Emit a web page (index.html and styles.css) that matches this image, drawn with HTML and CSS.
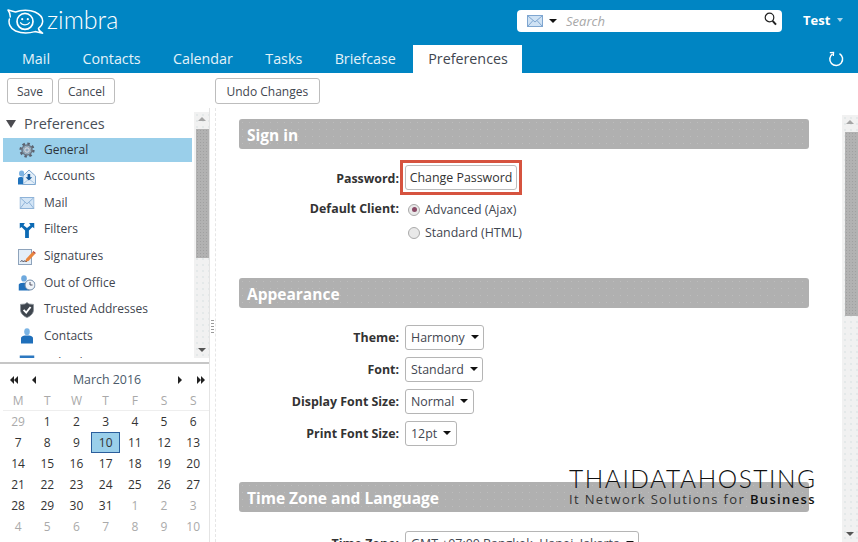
FILE: index.html
```html
<!DOCTYPE html>
<html lang="en">
<head>
<meta charset="utf-8">
<title>Zimbra Preferences</title>
<link rel="stylesheet" href="styles.css">
</head>
<body>
<div class="app">
  <header class="top">
    <div class="logo">
      <svg class="logo-mark" width="37" height="25" viewBox="0 0 37 25" fill="none" stroke="#fff" stroke-width="1.5" stroke-linejoin="round" stroke-linecap="round">
        <path d="M3.2 8 C3.4 5.5 2.6 3.2 1 1 L8.5 3 C14 0.6 23 0.7 28 3 C33.5 5.5 36 9.2 35.6 13 C35.3 15.8 33.6 17.8 31.5 19.4 C31.6 21.2 33 22.8 35.6 24.2 L28 22.6 C22 24.3 14 24.2 8.6 22 C3 19.7 1.2 14 2.4 10"/>
        <circle cx="18" cy="12.4" r="8" stroke-width="1.7"/>
        <circle cx="15.2" cy="10.2" r="1.1" fill="#fff" stroke="none"/>
        <circle cx="20.8" cy="10.2" r="1.1" fill="#fff" stroke="none"/>
        <path d="M13.6 13.8 C15 16.6 21 16.6 22.4 13.8" stroke-width="1.3"/>
      </svg>
      <span class="logo-text">zimbra</span>
    </div>
    <div class="search">
      <svg class="search-env" width="16" height="12" viewBox="0 0 16 12"><rect x="0.5" y="0.5" width="15" height="11" fill="#cfe2f4" stroke="#7fa6d0"/><path d="M1 1 L8 7 L15 1 M1 11 L6 5.5 M15 11 L10 5.5" fill="none" stroke="#7fa6d0"/></svg>
      <span class="caret-black"></span>
      <span class="search-hint">Search</span>
      <svg class="search-glass" width="13" height="14" viewBox="0 0 13 14" fill="none" stroke="#222"><circle cx="5.5" cy="5.5" r="4.3" stroke-width="1.2"/><path d="M8.6 8.8 L12 12.6" stroke-width="2"/></svg>
    </div>
    <div class="user">Test<span class="caret-user"></span></div>
  </header>
  <nav class="tabs">
    <span class="tab">Mail</span>
    <span class="tab">Contacts</span>
    <span class="tab">Calendar</span>
    <span class="tab">Tasks</span>
    <span class="tab">Briefcase</span>
    <span class="tab tab-on">Preferences</span>
    <svg class="refresh" width="16" height="16" viewBox="0 0 16 16" fill="none" stroke="#fff" stroke-width="1.5"><path d="M4.6 2.8 A6.4 6.4 0 1 0 11.5 2.6"/><path d="M1.8 1.6 L5.6 1.4 L5.4 5" stroke-width="1.2"/></svg>
  </nav>
  <div class="toolbar">
    <div class="tool-left">
      <button class="btn">Save</button>
      <button class="btn">Cancel</button>
    </div>
    <button class="btn btn-wide">Undo Changes</button>
  </div>
  <div class="main">
    <aside class="side">
      <div class="tree-wrap">
        <div class="tree">
          <div class="tree-head"><span class="tri"></span>Preferences</div>
          <div class="row row-on">
            <svg class="ic" width="16" height="16" viewBox="0 0 16 16"><circle cx="8" cy="8" r="6.2" fill="none" stroke="#59616e" stroke-width="2.8" stroke-dasharray="2.4 2.4"/><circle cx="8" cy="8" r="5" fill="none" stroke="#6e7784" stroke-width="1.6"/><circle cx="8" cy="8" r="3.4" fill="#c9d3dd" stroke="#7d8793" stroke-width=".8"/><circle cx="8" cy="8" r="1.6" fill="#8fa8bd"/></svg>
            General
          </div>
          <div class="row">
            <svg class="ic" width="18" height="16" viewBox="0 0 18 16"><path d="M5 15.5 V7 L11 1 L17.5 7 V15.5 Z" fill="#e3eef8" stroke="#7fa8d0"/><path d="M5 15 L11 10 L17.5 15" fill="none" stroke="#a8c6e2"/><ellipse cx="3.6" cy="4.5" rx="2.6" ry="3" fill="#7cb2e2"/><path d="M0 15.5 V9.5 C0 7.5 5 7.5 5 9 V15.5 Z" fill="#2073bd"/><path d="M9.6 5 H12.2 V8.2 H14.2 L10.9 11.6 L7.6 8.2 H9.6 Z" fill="#17599a"/></svg>
            Accounts
          </div>
          <div class="row">
            <svg class="ic" width="15" height="12" viewBox="0 0 15 12"><rect x=".5" y=".5" width="14" height="11" fill="#d3e5f6" stroke="#8fb3d8"/><path d="M1 1 L7.5 6.8 L14 1 M1 11 L5.6 5.2 M14 11 L9.4 5.2" fill="none" stroke="#8fb3d8"/></svg>
            Mail
          </div>
          <div class="row">
            <svg class="ic" width="15" height="16" viewBox="0 0 15 16"><path d="M0 1 H5.4 L4 3.2 L7.5 6 L11 3.2 L9.6 1 H15 V6.4 L13 5 L9.4 8.6 V16 H5.6 V8.6 L2 5 L0 6.4 Z" fill="#0c6ab4"/></svg>
            Filters
          </div>
          <div class="row">
            <svg class="ic" width="18" height="16" viewBox="0 0 18 16"><rect x=".5" y=".5" width="13" height="15" fill="#e4eef8" stroke="#8ea3bb"/><path d="M2.5 12.5 C4 10.5 5 13.5 6.5 12 L9 12.5" fill="none" stroke="#334"/><path d="M8 10 L14.5 3 L17 5 L10.5 12 L7.5 12.8 Z" fill="#e9853d"/><path d="M14.5 3 L15.5 2 L17.8 4 L17 5 Z" fill="#b9402e"/></svg>
            Signatures
          </div>
          <div class="row">
            <svg class="ic" width="17" height="16" viewBox="0 0 17 16"><ellipse cx="5.5" cy="3.4" rx="2.8" ry="3.2" fill="#6ea9de"/><path d="M0 15.5 V10 C0 7 11 7 11 10 V15.5 Z" fill="#1f6fba"/><circle cx="11.5" cy="10" r="5" fill="#eef3f8" stroke="#6d88a6"/><path d="M11.5 7 V10 H14" fill="none" stroke="#445" stroke-width=".9"/></svg>
            Out of Office
          </div>
          <div class="row">
            <svg class="ic" width="14" height="16" viewBox="0 0 14 16"><path d="M7 .5 L9 2 L13.5 2.4 V8 C13.5 11.6 10 14.4 7 15.6 C4 14.4 .5 11.6 .5 8 V2.4 L5 2 Z" fill="#3f464e" stroke="#8b939b" stroke-width=".8"/><path d="M3.6 7.8 L6.2 10.6 L10.6 5" fill="none" stroke="#fff" stroke-width="1.9"/></svg>
            Trusted Addresses
          </div>
          <div class="row">
            <svg class="ic" width="12" height="16" viewBox="0 0 12 16"><ellipse cx="6" cy="3.7" rx="2.8" ry="3.4" fill="#7bb4e4"/><path d="M0 15.5 V10.5 C0 8 3 7.6 6 7.6 C9 7.6 12 8 12 10.5 V15.5 Z" fill="#1f6fba"/></svg>
            Contacts
          </div>
          <div class="row">
            <svg class="ic" width="15" height="16" viewBox="0 0 15 16"><rect x=".5" y="1" width="14" height="14" fill="#dbe8f4" stroke="#2d78c0"/><rect x=".5" y="1" width="14" height="4" fill="#2d78c0"/></svg>
            Calendar
          </div>
        </div>
        <div class="vscroll vscroll-side">
          <span class="arrow-up"></span>
          <span class="thumb thumb-side"></span>
          <span class="track"></span>
          <span class="arrow-down"></span>
        </div>
      </div>
      <div class="cal">
        <div class="cal-head">
          <span class="cal-nav"><span class="ar-l"></span><span class="ar-l"></span></span>
          <span class="cal-nav"><span class="ar-l"></span></span>
          <span class="cal-title">March 2016</span>
          <span class="cal-nav"><span class="ar-r"></span></span>
          <span class="cal-nav"><span class="ar-r"></span><span class="ar-r"></span></span>
        </div>
        <div class="cal-grid cal-dow">
          <span>M</span><span>T</span><span>W</span><span>T</span><span>F</span><span>S</span><span>S</span>
        </div>
        <div class="cal-grid">
          <span class="off">29</span><span>1</span><span>2</span><span>3</span><span>4</span><span>5</span><span>6</span>
          <span>7</span><span>8</span><span>9</span><span class="today">10</span><span>11</span><span>12</span><span>13</span>
          <span>14</span><span>15</span><span>16</span><span>17</span><span>18</span><span>19</span><span>20</span>
          <span>21</span><span>22</span><span>23</span><span>24</span><span>25</span><span>26</span><span>27</span>
          <span>28</span><span>29</span><span>30</span><span>31</span><span class="off">1</span><span class="off">2</span><span class="off">3</span>
          <span class="off">4</span><span class="off">5</span><span class="off">6</span><span class="off">7</span><span class="off">8</span><span class="off">9</span><span class="off">10</span>
        </div>
      </div>
    </aside>
    <div class="splitter"><span class="grip"></span></div>
    <main class="content">
      <section class="sec sec-sign">
        <h2 class="bar">Sign in</h2>
        <div class="form-row form-pass">
          <span class="lab">Password:</span>
          <span class="hl"><button class="btn btn-in">Change Password</button></span>
        </div>
        <div class="form-row form-client">
          <span class="lab">Default Client:</span>
          <div class="radios">
            <span class="radio"><span class="dot dot-on"></span>Advanced (Ajax)</span>
            <span class="radio"><span class="dot"></span>Standard (HTML)</span>
          </div>
        </div>
      </section>
      <section class="sec sec-app">
        <h2 class="bar">Appearance</h2>
        <div class="form-row form-sel"><span class="lab">Theme:</span><span class="sel">Harmony<span class="caret-black"></span></span></div>
        <div class="form-row form-sel"><span class="lab">Font:</span><span class="sel">Standard<span class="caret-black"></span></span></div>
        <div class="form-row form-sel"><span class="lab">Display Font Size:</span><span class="sel">Normal<span class="caret-black"></span></span></div>
        <div class="form-row form-sel"><span class="lab">Print Font Size:</span><span class="sel">12pt<span class="caret-black"></span></span></div>
      </section>
      <section class="sec sec-time">
        <h2 class="bar">Time Zone and Language</h2>
        <div class="form-row form-sel"><span class="lab">Time Zone:</span><span class="sel">GMT +07:00 Bangkok, Hanoi, Jakarta<span class="caret-black"></span></span></div>
      </section>
    </main>
    <div class="vscroll vscroll-main">
      <span class="arrow-up"></span>
      <span class="thumb thumb-main"></span>
      <span class="track"></span>
      <span class="arrow-down"></span>
    </div>
  </div>
  <div class="mark">
    <div class="mark-a">THAIDATAHOSTING</div>
    <div class="mark-b">It Network Solutions for <b>Business</b></div>
  </div>
</div>
</body>
</html>
```
FILE: styles.css
```css
* { box-sizing: border-box; }
html, body { margin: 0; height: 100%; overflow: hidden; }
body { font-family: "Open Sans", "Noto Sans", sans-serif; font-size: 12px; color: #3f4650; background: #fff; }
.app { position: relative; width: 858px; height: 542px; display: flex; flex-direction: column; overflow: hidden; }

.top { height: 45px; background: #0085c3; display: flex; align-items: flex-start; flex: none; }
.logo { display: flex; align-items: center; margin: 9px 0 0 7px; width: 510px; height: 25px; color: #fff; }
.logo-mark { flex: none; }
.logo-text { font-family: Lato, sans-serif; font-weight: 300; font-size: 25px; line-height: 25px; margin-left: 3px; margin-top: -4px; }
.search { width: 265px; height: 22px; margin-top: 10px; background: #fff; border-radius: 4px; display: flex; align-items: center; padding: 0 5px 0 10px; }
.search-env { flex: none; }
.caret-black { display: inline-block; width: 0; height: 0; border: 4px solid transparent; border-top: 4px solid #111; border-bottom: 0; flex: none; }
.search .caret-black { margin-left: 6px; }
.search-hint { margin-left: 9px; font-style: italic; font-size: 13px; color: #a8a8a8; flex: 1; }
.search-glass { margin-top: -4px; }
.user { margin: 11px 0 0 21px; color: #fff; font-weight: 700; font-size: 13px; line-height: 18px; display: flex; align-items: center; }
.caret-user { width: 0; height: 0; border: 3.5px solid transparent; border-top: 4px solid #a9d4ea; border-bottom: 0; margin-left: 7px; }

.tabs { height: 28px; background: #0085c3; display: flex; align-items: stretch; padding-left: 7px; gap: 2.4px; flex: none; position: relative; }
.tab { padding: 0 15px; font-size: 14.3px; line-height: 28px; color: #e4f2f9; white-space: nowrap; }
.tab-on { background: #fff; color: #3f4650; padding-right: 14px; }
.refresh { margin: 6px 0 0 auto; position: relative; right: 14px; }

.toolbar { height: 35px; flex: none; display: flex; padding: 5px 0 0 7px; }
.tool-left { display: flex; gap: 5px; width: 208px; }
.btn { height: 26px; padding: 0 9px; border: 1px solid #bdbdbd; border-radius: 3px; background: #fff; font: inherit; font-size: 12px; color: #3f4650; }
.btn-wide { padding: 0 10.5px; }

.main { flex: 1; display: flex; min-height: 0; }
.side { width: 210px; flex: none; display: flex; flex-direction: column; border-right: 1px solid #e4e4e4; }
.tree-wrap { height: 256px; flex: none; display: flex; align-items: flex-start; border-bottom: 2px solid #c6c6c6; overflow: hidden; }
.tree { width: 194px; height: 250px; flex: none; padding-left: 3px; overflow: hidden; }
.tree-head { height: 30px; font-size: 14.5px; line-height: 30px; padding: 1px 0 0 3px; display: flex; align-items: center; color: #4a5058; }
.tri { width: 0; height: 0; border: 5px solid transparent; border-top: 8px solid #4b4b50; border-bottom: 0; margin-right: 8px; margin-top: 1px; }
.row { height: 24px; width: 189px; margin-bottom: 2.65px; display: flex; align-items: center; padding-bottom: 2px; white-space: nowrap; position: relative; padding-left: 41px; }
.row-on { background: #9acfea; color: #2e343a; }
.ic { position: absolute; left: 24px; top: 50%; transform: translate(-50%, -50%); }

.vscroll { display: flex; flex-direction: column; background-color: #f1f1f1; background-image: radial-gradient(#d5dfe0 .6px, transparent .8px); background-size: 6px 6px; align-items: flex-end; flex: none; }
.vscroll-side { width: 15px; margin-top: 4px; height: 246px; }
.vscroll-main { width: 16px; margin: 7px 0 0 auto; height: 427px; }
.arrow-up { height: 17px; flex: none; display: flex; width: 100%; position: relative; }
.arrow-up::after { content: ""; position: absolute; left: 50%; top: 5px; margin-left: -4px; border: 4px solid transparent; border-bottom: 4px solid #a5a5a5; border-top: 0; }
.arrow-down { height: 16px; flex: none; width: 100%; position: relative; }
.arrow-down::after { content: ""; position: absolute; left: 50%; top: 6px; margin-left: -4px; border: 4px solid transparent; border-top: 4px solid #555; border-bottom: 0; }
.thumb { width: 13px; flex: none; background-color: #b2b2b2; background-image: radial-gradient(#a0a0a0 .5px, transparent .7px); background-size: 3px 3px; }
.thumb-side { height: 129px; }
.thumb-main { height: 184px; }
.track { flex: 1; }

.cal { flex: 1; padding: 5px 0 0 3px; }
.cal-head { height: 21px; display: flex; align-items: center; padding-left: 7px; }
.cal-title { flex: 1; text-align: center; color: #4a5a6a; padding-right: 7px; font-size: 12.4px; }
.cal-nav { display: flex; width: 22px; justify-content: flex-start; }
.cal-head .cal-nav:nth-child(4) { width: 26px; justify-content: center; }
.cal-head .cal-nav:nth-child(5) { width: 16px; justify-content: center; }
.ar-l { width: 0; height: 0; border: 4px solid transparent; border-right: 4px solid #222; border-left: 0; }
.ar-r { width: 0; height: 0; border: 4px solid transparent; border-left: 4px solid #222; border-right: 0; }
.cal-grid { display: grid; grid-template-columns: repeat(7, 29.2px); grid-auto-rows: 21px; text-align: center; line-height: 21px; color: #333; padding-left: .5px; }
.cal-dow { height: 21px; color: #a9a9a9; border-bottom: 1px solid #eee; width: 206px; }
.off { color: #aaa; }
.today { background: #9acfea; border: 1px solid #2b5e9c; line-height: 19px; }

.splitter { width: 6px; flex: none; border-right: 1px dashed #e6e6e6; display: flex; align-items: flex-start; justify-content: center; padding-top: 212px; }
.grip { width: 3px; height: 13px; background: repeating-linear-gradient(#9a9a9a 0 1px, transparent 1px 3px); }

.content { width: 620px; flex: none; padding: 11px 0 0 23px; overflow: hidden; font-size: 12.4px; }
.sec { width: 570px; }
.sec-sign { height: 159px; }
.sec-app { height: 204px; }
.bar { margin: 0; height: 30px; border-radius: 3px; color: #fff; font-size: 15.5px; font-weight: 700; line-height: 32px; padding-left: 8px; background-color: #b0b0b0; background-image: radial-gradient(#bdbdbd .6px, transparent .8px); background-size: 7px 7px; }
.form-row { display: grid; grid-template-columns: 160px auto; column-gap: 6px; justify-content: start; align-items: center; }
.lab { text-align: right; font-weight: 700; color: #333; white-space: nowrap; }
.form-pass { margin-top: 11px; height: 35px; column-gap: 1px; }
.form-pass .lab { padding-top: 1px; }
.hl { border: 3px solid #d6533f; padding: 2px; width: 122px; height: 35px; display: block; }
.btn-in { width: 112px; height: 25px; padding: 0; color: #333; font-size: 12.4px; }
.form-client { margin-top: 2px; align-items: start; }
.form-client .lab { line-height: 24px; }
.radios { display: flex; flex-direction: column; }
.radio { display: flex; align-items: center; height: 23px; white-space: nowrap; line-height: 23px; }
.radio:first-child { margin-top: 1px; }
.dot { width: 12px; height: 12px; border-radius: 50%; border: 1px solid #aaa; background: #e9e9e9; margin: 0 5px 0 3px; position: relative; flex: none; }
.dot-on::after { content: ""; position: absolute; left: 2.5px; top: 2.5px; width: 5px; height: 5px; border-radius: 50%; background: #8a4a66; }
.form-sel { height: 32px; }
.sec-app .bar + .form-sel { margin-top: 13px; }
.sec-time .bar + .form-sel { margin-top: 15px; }
.sel { height: 25px; border: 1px solid #b5b5b5; border-radius: 3px; display: inline-flex; align-items: center; padding: 0 4.5px 0 5px; white-space: nowrap; color: #3f4650; justify-self: start; }
.sel .caret-black { margin-left: 6px; }

.mark { position: absolute; left: 569px; top: 466px; color: #222; }
.mark-a { font-family: Lato, sans-serif; font-weight: 300; font-size: 24.5px; line-height: 26px; letter-spacing: 1.55px; white-space: nowrap; color: #111; }
.mark-b { font-size: 13px; line-height: 14px; letter-spacing: 1.35px; white-space: nowrap; color: #333; }
.mark-b b { font-weight: 600; color: #111; }
```
